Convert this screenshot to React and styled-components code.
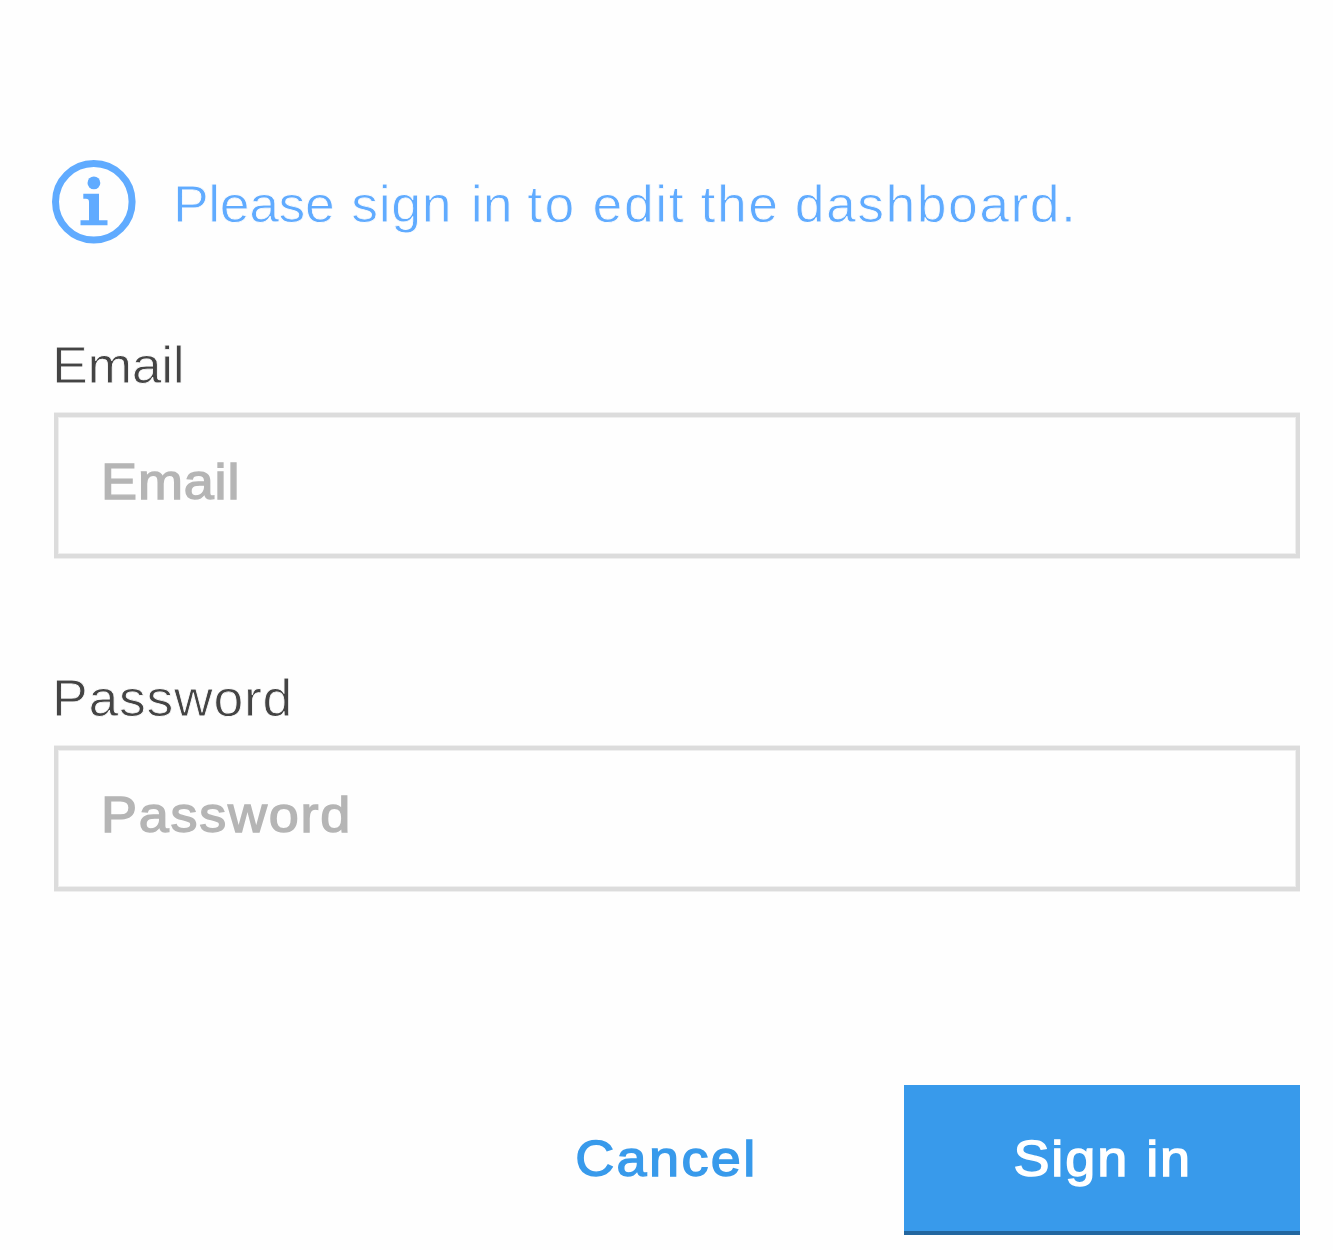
import React from 'react';
import styled, { createGlobalStyle } from 'styled-components';

const GlobalStyle = createGlobalStyle`
  *, *::before, *::after { box-sizing: border-box; }
  body { margin: 0; background: #fefefe; }
`;

const fontStack = "'Liberation Sans', Arial, sans-serif";

const Form = styled.form`
  display: flex;
  flex-direction: column;
  width: 1333px;
  height: 1250px;
  padding: 160px 33px 0 52px;
  font-family: ${fontStack};
  overflow: hidden;
`;

const Notice = styled.div`
  display: flex;
  align-items: center;
  gap: 37px;
  height: 84px;
  color: #60abff;
`;

/* The background-coloured stroke trims the glyph edges into a light weight. */
const LightText = styled.span`
  display: block;
  width: max-content;
  font-size: 51.5px;
  line-height: 60px;
  letter-spacing: ${(p) => p.$tracking || 0}px;
  -webkit-text-stroke: 0.8px #fefefe;
  white-space: pre;
  transform: scaleX(1.04);
  transform-origin: left center;
`;

const NoticeText = styled(LightText)`
  height: 56px;
`;

const Word = styled.span`
  letter-spacing: ${(p) => p.$tracking}px;
  word-spacing: ${(p) => p.$space}px;
`;

const Field = styled.label`
  display: flex;
  flex-direction: column;
  padding-left: 2px;
  margin-top: ${(p) => p.$top}px;
  color: #444;
`;

const LabelText = styled(LightText)`
  margin-left: -2px;
  height: 78px;
`;

const InputBox = styled.div`
  display: flex;
  align-items: center;
  width: 1246px;
  height: 145px;
  padding: 0 44px 7px 43px;
  border: 4px solid #dcdcdc;
  background: #fefefe;
  box-shadow: 0 -1px #efefef, inset 0 0 0 1px #efefef, 0 1px #efefef;
  color: #b5b5b5;
`;

const MediumText = styled.span`
  display: block;
  font-size: 50px;
  line-height: 58px;
  letter-spacing: ${(p) => p.$tracking}px;
  margin-right: ${(p) => -p.$tracking}px;
  -webkit-text-stroke: 1.4px currentColor;
  white-space: nowrap;
  transform: scaleX(1.08);
  transform-origin: ${(p) => p.$origin || 'left'} center;
`;

const Actions = styled.div`
  display: flex;
  justify-content: flex-end;
  margin-top: 194px;
`;

const Button = styled.button`
  display: flex;
  align-items: center;
  justify-content: center;
  width: ${(p) => p.$width}px;
  height: 150px;
  padding: 1px 0 0;
  border: 0 solid transparent;
  border-bottom: 4px solid ${(p) => (p.$primary ? '#22669f' : 'transparent')};
  background: ${(p) => (p.$primary ? '#389aeb' : 'transparent')};
  color: ${(p) => (p.$primary ? '#fff' : '#389aeb')};
  font-family: ${fontStack};
`;

const InfoIcon = () => (
  <svg width="84" height="84" viewBox="0 0 84 84" aria-hidden="true">
    <circle cx="41.8" cy="41.8" r="38.3" fill="none" stroke="currentColor" strokeWidth="7" />
    <circle cx="41.9" cy="22.9" r="6.4" fill="currentColor" />
    <path d="M31.3 33.7H47V60.3H55.5V65.3H28.5V60.3H37V42Q37 38.7 34 38.7H31.3Z" fill="currentColor" />
  </svg>
);

/* Word, letter spacing, extra width of the following space. */
const message = [
  ['Please ', -0.4, 2.5],
  ['sign ', 0.6, 3],
  ['in ', 0, 0],
  ['to ', 2.3, -1.4],
  ['edit ', 1.5, -1],
  ['the ', 1.4, -1],
  ['dashboard.', 1.4, 0],
];

const TextField = ({ name, top, labelTracking, tracking }) => (
  <Field $top={top}>
    <LabelText $tracking={labelTracking}>{name}</LabelText>
    <InputBox>
      <MediumText $tracking={tracking}>{name}</MediumText>
    </InputBox>
  </Field>
);

export default function App() {
  return (
    <>
      <GlobalStyle />
      <Form onSubmit={(e) => e.preventDefault()}>
        <Notice>
          <InfoIcon />
          <NoticeText>
            {message.map(([word, tracking, space]) => (
              <Word key={word} $tracking={tracking} $space={space}>{word}</Word>
            ))}
          </NoticeText>
        </Notice>
        <TextField name="Email" top={91} labelTracking={-0.3} tracking={0.8} />
        <TextField name="Password" top={110} labelTracking={0.7} tracking={1.6} />
        <Actions>
          <Button type="button" $width={477}>
            <MediumText $tracking={2.2} $origin="center">Cancel</MediumText>
          </Button>
          <Button type="submit" $primary $width={396}>
            <MediumText $tracking={1.8} $origin="center">Sign in</MediumText>
          </Button>
        </Actions>
      </Form>
    </>
  );
}
